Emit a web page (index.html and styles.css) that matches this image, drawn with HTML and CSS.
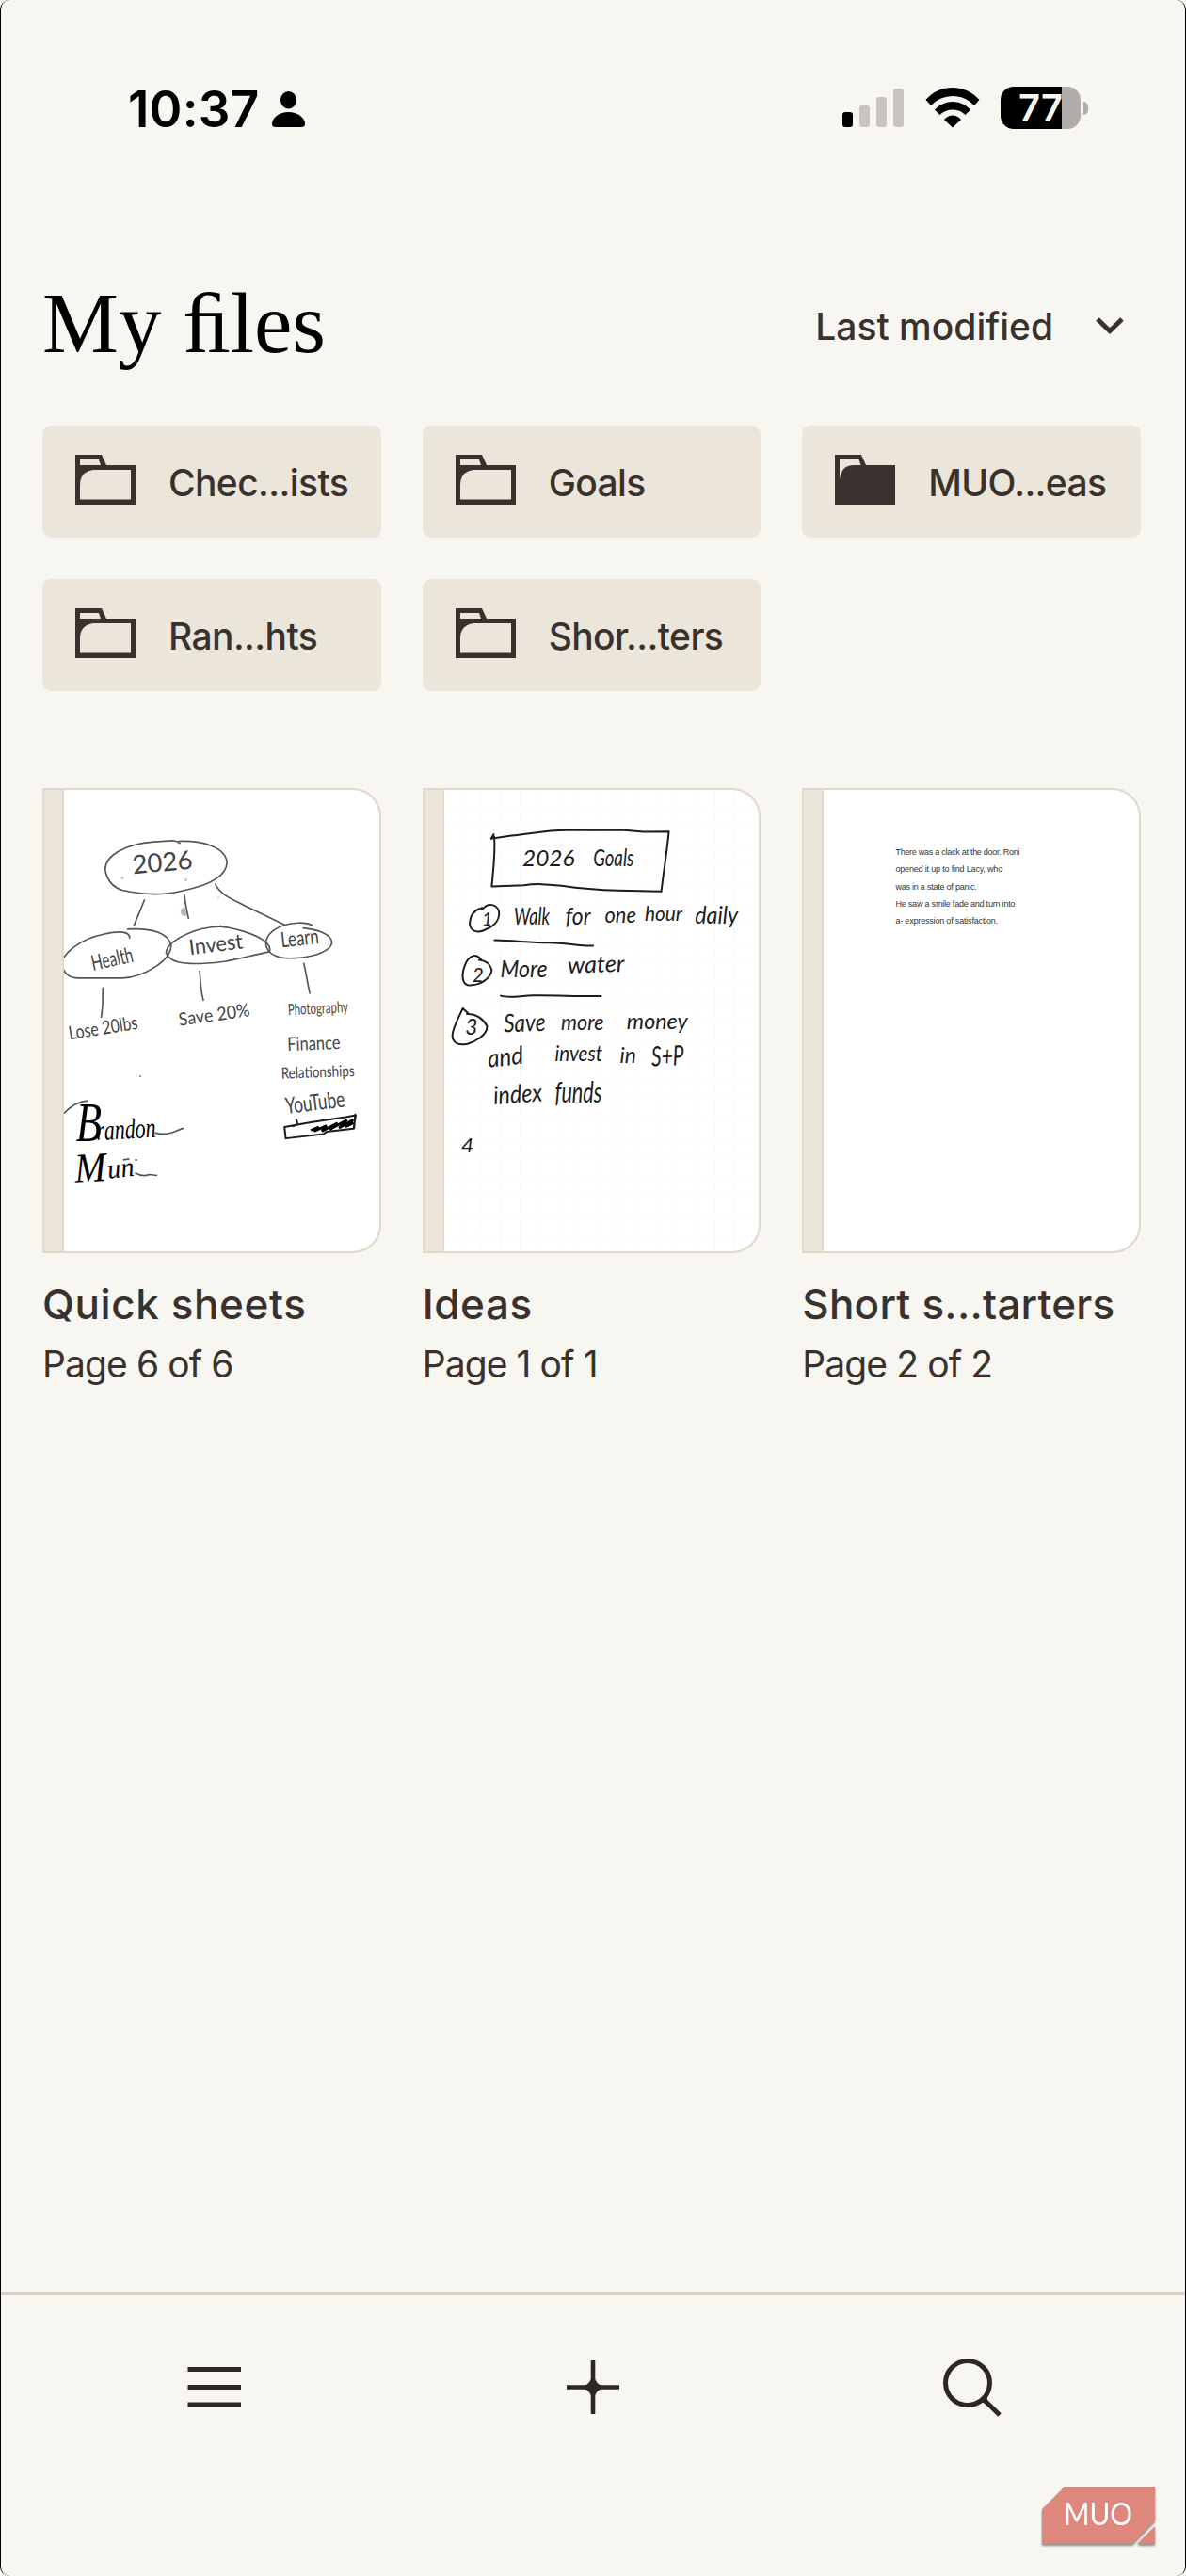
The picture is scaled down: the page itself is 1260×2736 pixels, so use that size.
FILE: index.html
```html
<!DOCTYPE html>
<html lang="en">
<head>
  <meta charset="UTF-8">
  <title>My files</title>
  <link rel="stylesheet" href="styles.css">
</head>
<body>
  <svg width="0" height="0" class="defs">
    <symbol id="folder" viewBox="0 0 64 53">
      <path fill-rule="evenodd" d="M0 0H28L33 11H64V53H0ZM5 5V11H27L25 5ZM19 16Q5 18 5 32V47.500H59V16Z"/>
    </symbol>
    <symbol id="folder-full" viewBox="0 0 64 53">
      <path fill-rule="evenodd" d="M0 0H28L33 11H64V53H0ZM5 5V26Q7 11 20 11H27.500L25.500 5Z"/>
    </symbol>
  </svg>

  <div class="screen">
    <div class="statusbar">
      <div class="clock">
        <span class="time">10:37</span>
        <svg width="35" height="38" viewBox="0 0 35 38">
          <ellipse cx="17.500" cy="9.200" rx="8.500" ry="9.200"/>
          <path d="M4 38C1 38 0 37 0 34.500C0 28 8 22 17.500 22S35 28 35 34.500C35 37 34 38 31 38Z"/>
        </svg>
      </div>
      <div class="indicators">
        <div class="signal">
          <span class="on"></span>
          <span></span>
          <span></span>
          <span></span>
        </div>
        <svg class="wifi" width="58" height="43" viewBox="0 0 58 43">
          <path d="M0.500 13Q12 0 29 0T57.500 13L52 19Q42 9 29 9T6 19Z"/>
          <path d="M10 23.500Q18 15 29 15T48 23.500L42.500 29Q37 23.500 29 23.500T15.500 29Z"/>
          <path d="M20 34Q24 29.500 29 29.500T38 34L29 42.500Z"/>
        </svg>
        <div class="battery"><span>77</span></div>
        <div class="nub"></div>
      </div>
    </div>

    <div class="header">
      <h1>My ﬁles</h1>
      <div class="sort">
        <span>Last modified</span>
        <svg width="30" height="18" viewBox="0 0 30 18"><path d="M2 2L15 14.500L28 2" fill="none" stroke="#38312d" stroke-width="5"/></svg>
      </div>
    </div>

    <div class="folders">
      <div class="folder"><svg><use href="#folder"/></svg><span>Chec...ists</span></div>
      <div class="folder"><svg><use href="#folder"/></svg><span>Goals</span></div>
      <div class="folder"><svg><use href="#folder-full"/></svg><span>MUO...eas</span></div>
      <div class="folder"><svg><use href="#folder"/></svg><span>Ran...hts</span></div>
      <div class="folder"><svg><use href="#folder"/></svg><span>Shor...ters</span></div>
    </div>

    <div class="notebooks">
      <div class="notebook">
        <div class="cover">
          <svg class="sheet" viewBox="114 57 1003 1468">
            <g class="pencil">
              <path d="M484 228C470 212 450 220 400 222C310 228 245 265 245 310C250 340 265 365 300 376C370 392 440 390 490 378C570 362 632 335 633 287C628 240 560 217 478 220"/>
              <path d="M371 405L336 490M497 390C501 420 504 440 511 467M595 355C610 390 650 405 690 425L815 485"/>
              <path d="M323 530C325 505 290 505 240 516C170 530 120 570 108 602C108 640 130 656 160 656H300C370 652 455 600 455 552C448 515 400 495 315 500"/>
              <path d="M632 495C610 488 560 494 525 507C480 525 440 550 439 575C450 605 490 612 560 609C630 608 680 590 768 572C780 540 720 510 610 489"/>
              <path d="M905 488C880 475 840 480 815 487C780 500 755 520 757 550C765 585 800 595 850 592C910 588 968 570 967 540C962 515 920 500 874 496"/>
              <path d="M238 685C236 720 240 745 232 782M546 632C548 670 550 700 558 728M877 607C885 640 890 675 897 706"/>
            </g>
            <circle cx="300" cy="337" r="5" fill="#ccc"/>
            <circle cx="502" cy="343" r="5" fill="#ccc"/>
            <circle cx="606" cy="400" r="4" fill="#ddd"/>
            <path d="M498 428Q480 435 486 449T506 456Z" fill="#bbb"/>
            <circle cx="357" cy="968" r="3" fill="#777"/>
            <g class="hand light">
              <text x="334" y="324" font-size="82" textLength="192" lengthAdjust="spacingAndGlyphs" transform="rotate(-5 334 324)">2026</text>
              <text x="206" y="632" font-size="68" textLength="135" lengthAdjust="spacingAndGlyphs" transform="rotate(-12 206 632)">Health</text>
              <text x="515" y="582" font-size="68" textLength="172" lengthAdjust="spacingAndGlyphs" transform="rotate(-7 515 582)">Invest</text>
              <text x="806" y="558" font-size="68" textLength="122" lengthAdjust="spacingAndGlyphs" transform="rotate(-6 806 558)">Learn</text>
              <text x="132" y="852" font-size="60" textLength="222" lengthAdjust="spacingAndGlyphs" transform="rotate(-9 132 852)">Lose 20lbs</text>
              <text x="482" y="808" font-size="58" textLength="228" lengthAdjust="spacingAndGlyphs" transform="rotate(-8 482 808)">Save 20%</text>
              <text x="828" y="774" font-size="50" textLength="192" lengthAdjust="spacingAndGlyphs" transform="rotate(-3 828 774)">Photography</text>
              <text x="826" y="887" font-size="60" textLength="168" lengthAdjust="spacingAndGlyphs" transform="rotate(-2 826 887)">Finance</text>
              <text x="806" y="976" font-size="50" textLength="234" lengthAdjust="spacingAndGlyphs" transform="rotate(-2 806 976)">Relationships</text>
              <text x="822" y="1088" font-size="72" textLength="190" lengthAdjust="spacingAndGlyphs" transform="rotate(-7 822 1088)">YouTube</text>
            </g>
            <path class="ink" d="M816 1130L820 1166L940 1152L950 1145L1036 1135L1043 1092L1010 1098L900 1115L816 1130M1041 1090L1038 1133M853 1105Q864 1124 842 1127"/>
            <path d="M900 1140L925 1130L910 1143L950 1125L935 1143L985 1117L960 1138L1015 1107L990 1133L1035 1106L1010 1129L1036 1116" fill="none" stroke="#000" stroke-width="8"/>
            <path class="pencil" d="M114 1086Q150 1048 190 1046M403 1148Q430 1156 460 1147L495 1133M340 1276Q365 1290 385 1281L411 1284M302 1234L322 1231M340 1234L347 1235"/>
            <g class="hand signature">
              <text x="152" y="1176" font-size="176" textLength="82" lengthAdjust="spacingAndGlyphs">B</text>
              <text x="218" y="1172" font-size="92" textLength="190" lengthAdjust="spacingAndGlyphs" transform="rotate(-3 218 1172)">randon</text>
              <text x="150" y="1306" font-size="132" textLength="100" lengthAdjust="spacingAndGlyphs" transform="rotate(-3 150 1306)">M</text>
              <text x="255" y="1294" font-size="88" textLength="85" lengthAdjust="spacingAndGlyphs" transform="rotate(-6 255 1294)">un</text>
            </g>
          </svg>
        </div>
        <h2>Quick sheets</h2>
        <p>Page 6 of 6</p>
      </div>

      <div class="notebook">
        <div class="cover">
          <svg class="sheet" viewBox="126 57 1003 1468">
            <defs>
              <pattern id="grid" x="180" y="110" width="62" height="62" patternUnits="userSpaceOnUse">
                <path d="M0 0H62M0 0V62" fill="none" stroke="#fbf8fc" stroke-width="5"/>
              </pattern>
            </defs>
            <rect x="126" y="57" width="1003" height="1468" fill="url(#grid)"/>
            <g class="ink">
              <path d="M283 198L275 212L340 202C400 196 460 184 520 185L690 184L760 190L841 189C835 255 825 310 817 380L680 377C600 375 540 368 500 362C450 357 420 354 380 360L277 364C282 310 289 260 285 205"/>
              <path d="M247 432C215 440 208 460 207 487C215 512 240 512 260 500C290 487 305 465 299 440C290 420 265 415 247 437"/>
              <path d="M286 535C350 536 400 543 460 543C520 544 550 554 600 553"/>
              <path d="M246 600C228 575 208 583 196 605C180 640 180 670 200 678C240 682 275 655 277 630C272 610 255 600 237 598"/>
              <path d="M306 712C330 720 360 713 410 711C480 710 550 714 625 713"/>
              <path d="M202 768L185 752C172 780 155 810 152 835C150 865 175 870 200 865C225 858 265 835 262 808C250 785 225 768 198 770"/>
            </g>
            <g class="hand goals">
              <text x="375" y="299" font-size="72" textLength="166" lengthAdjust="spacingAndGlyphs">2026</text>
              <text x="600" y="299" font-size="76" textLength="130" lengthAdjust="spacingAndGlyphs">Goals</text>
              <text x="246" y="487" font-size="58">1</text>
              <text x="348" y="484" font-size="76" textLength="114" lengthAdjust="spacingAndGlyphs">Walk</text>
              <text x="512" y="484" font-size="76" textLength="80" lengthAdjust="spacingAndGlyphs">for</text>
              <text x="637" y="480" font-size="72" textLength="100" lengthAdjust="spacingAndGlyphs">one</text>
              <text x="764" y="474" font-size="66" textLength="120" lengthAdjust="spacingAndGlyphs">hour</text>
              <text x="924" y="482" font-size="76" textLength="138" lengthAdjust="spacingAndGlyphs">daily</text>
              <text x="215" y="668" font-size="62">2</text>
              <text x="304" y="653" font-size="76" textLength="150" lengthAdjust="spacingAndGlyphs">More</text>
              <text x="519" y="641" font-size="74" textLength="182" lengthAdjust="spacingAndGlyphs" transform="rotate(-2 519 641)">water</text>
              <text x="193" y="836" font-size="68">3</text>
              <text x="316" y="828" font-size="80" textLength="133" lengthAdjust="spacingAndGlyphs" transform="rotate(-2 316 828)">Save</text>
              <text x="498" y="820" font-size="72" textLength="136" lengthAdjust="spacingAndGlyphs">more</text>
              <text x="707" y="818" font-size="72" textLength="194" lengthAdjust="spacingAndGlyphs">money</text>
              <text x="267" y="940" font-size="80" textLength="114" lengthAdjust="spacingAndGlyphs" transform="rotate(-6 267 940)">and</text>
              <text x="478" y="920" font-size="70" textLength="152" lengthAdjust="spacingAndGlyphs">invest</text>
              <text x="685" y="926" font-size="70" textLength="52" lengthAdjust="spacingAndGlyphs">in</text>
              <text x="786" y="936" font-size="88" textLength="104" lengthAdjust="spacingAndGlyphs" transform="rotate(-2 786 936)">S+P</text>
              <text x="284" y="1058" font-size="80" textLength="156" lengthAdjust="spacingAndGlyphs" transform="rotate(-4 284 1058)">index</text>
              <text x="478" y="1052" font-size="90" textLength="150" lengthAdjust="spacingAndGlyphs">funds</text>
              <text x="180" y="1212" font-size="66" textLength="40" lengthAdjust="spacingAndGlyphs">4</text>
            </g>
          </svg>
        </div>
        <h2>Ideas</h2>
        <p>Page 1 of 1</p>
      </div>

      <div class="notebook">
        <div class="cover">
          <svg class="sheet" viewBox="138 57 1003 1468">
            <g class="typed">
              <text x="367" y="263" textLength="396">There was a clack at the door. Roni</text>
              <text x="367" y="318" textLength="341">opened it up to find Lacy, who</text>
              <text x="367" y="373" textLength="259">was in a state of panic.</text>
              <text x="367" y="427" textLength="381">He saw a smile fade and turn into</text>
              <text x="367" y="482" textLength="326">a- expression of satisfaction.</text>
            </g>
          </svg>
        </div>
        <h2 class="long">Short s...tarters</h2>
        <p>Page 2 of 2</p>
      </div>
    </div>

    <div class="toolbar">
      <svg width="60" height="60" viewBox="0 0 60 60"><path d="M1.500 11.500H58M1.500 30.500H58M1.500 49H58" stroke="#2d2825" stroke-width="5"/></svg>
      <svg width="60" height="60" viewBox="0 0 60 60">
        <path d="M2 30.500H58M30 2V59" stroke="#2d2825" stroke-width="4.600"/>
        <path d="M30 20Q32 28.500 40 30.500Q32 32.500 30 41Q28 32.500 20 30.500Q28 28.500 30 20Z" fill="#2d2825" stroke="#2d2825" stroke-width="3"/>
      </svg>
      <svg width="64" height="64" viewBox="0 0 64 64">
        <circle cx="26" cy="26" r="23.500" fill="none" stroke="#2d2825" stroke-width="5"/>
        <path d="M42 42.500L60 60" stroke="#2d2825" stroke-width="5"/>
        <path d="M36 48L49 38Q45 42 48 46L46 49Q41 45 36 48Z" fill="#2d2825"/>
      </svg>
    </div>

    <svg class="watermark" width="124" height="66" viewBox="0 0 124 66">
      <path d="M25 1H121V37L97 62H1V25Z"/>
      <path d="M121 43V62H102Z"/>
      <text x="24" y="42" textLength="73" lengthAdjust="spacingAndGlyphs">MUO</text>
    </svg>
  </div>
</body>
</html>
```

FILE: styles.css
```css
* {
  box-sizing: border-box;
}

body {
  margin: 0;
  background: #fff;
  font-family: Inter, "Liberation Sans", sans-serif;
  color: #38312d;
}

.defs {
  position: absolute;
}

.screen {
  position: relative;
  display: flex;
  flex-direction: column;
  width: 1260px;
  height: 2736px;
  background: #f7f6f0;
  border-left: 1px solid #000;
  border-right: 1px solid #000;
  border-radius: 10px;
  overflow: hidden;
}

/* status bar */
.statusbar {
  display: flex;
  justify-content: space-between;
  height: 230px;
  padding: 92px 103px 0 135px;
  color: #000;
}

.clock {
  display: flex;
  height: 48px;
  align-items: center;
  gap: 13px;
}

.time {
  font-size: 53px;
  font-weight: 600;
  letter-spacing: 0.2px;
}

.indicators {
  display: flex;
  height: 45px;
}

.signal {
  display: flex;
  align-items: flex-end;
  gap: 7px;
  height: 43px;
  margin-right: 23px;
}

.signal span {
  width: 11px;
  height: 41px;
  border-radius: 3px;
  background: #c8c5c0;
}

.signal .on { height: 16px; background: #000; }
.signal span:nth-child(2) { height: 23px; }
.signal span:nth-child(3) { height: 32px; }

.wifi {
  margin: 1px 22px 0 0;
}

.battery {
  width: 85px;
  height: 45px;
  border-radius: 14px;
  background: linear-gradient(to right, #000 65px, #b0adaa 65px);
  color: #f8f6f1;
  font-size: 40px;
  font-weight: 600;
  line-height: 45px;
  text-align: center;
}

.nub {
  width: 5px;
  height: 14px;
  margin: 16px 0 0 3px;
  border-radius: 0 5px 5px 0;
  background: #b0adaa;
}

/* title row */
.header {
  display: flex;
  justify-content: space-between;
  height: 222px;
  padding: 60px 65px 0 44px;
}

h1 {
  margin: 0;
  color: #000;
  font-family: "Liberation Serif", serif;
  font-size: 91px;
  font-weight: 400;
  line-height: 108px;
}

.sort {
  display: flex;
  align-items: center;
  gap: 45px;
  height: 112px;
  font-size: 39px;
  font-weight: 500;
}

/* folders */
.folders {
  display: grid;
  grid-template-columns: repeat(3, 1fr);
  gap: 44px;
  padding: 0 47px 0 44px;
}

.folder {
  display: flex;
  align-items: center;
  height: 119px;
  padding-left: 35px;
  border-radius: 9px;
  background: #ece5da;
  font-size: 39px;
  font-weight: 500;
  letter-spacing: -0.6px;
}

.folder span {
  padding-top: 2px;
}

.folder svg {
  width: 64px;
  height: 53px;
  margin-right: 35px;
  margin-bottom: 4px;
  fill: #38312d;
}

/* notebooks */
.notebooks {
  display: grid;
  grid-template-columns: repeat(3, 1fr);
  gap: 44px;
  padding: 103px 47px 0 44px;
}

.cover {
  height: 494px;
  padding-left: 19px;
  border: 2px solid #e1dacb;
  border-radius: 0 30px 30px 0;
  background: #ece5da;
  overflow: hidden;
}

.sheet {
  display: block;
  width: 100%;
  height: 100%;
  border-left: 2px solid #e1dacb;
  border-radius: 0 28px 28px 0;
  background: #fff;
}

.notebook h2 {
  margin: 29px 0 0;
  font-size: 44px;
  font-weight: 500;
  line-height: 50px;
  letter-spacing: 0.6px;
}

.notebook .long {
  letter-spacing: 0.2px;
}

.notebook p {
  margin: 14px 0 0;
  font-size: 39px;
  line-height: 50px;
  letter-spacing: -0.9px;
}

.pencil {
  fill: none;
  stroke: #555;
  stroke-width: 5;
}

.ink {
  fill: none;
  stroke: #1c1c1c;
  stroke-width: 6;
  stroke-linecap: round;
  stroke-linejoin: round;
}

.hand {
  font-family: Lato, sans-serif;
  fill: #1c1c1c;
}

.goals {
  font-style: italic;
}

.light {
  fill: #444;
}

.signature {
  font-family: "Liberation Serif", serif;
  font-style: italic;
  fill: #000;
}

.typed {
  font-family: "Liberation Sans", sans-serif;
  font-size: 27px;
  fill: #333;
}

/* bottom toolbar */
.toolbar {
  display: flex;
  justify-content: space-between;
  height: 302px;
  margin-top: auto;
  padding: 67px 193px 0 197px;
  border-top: 4px solid #d9d1c4;
}

.watermark {
  position: absolute;
  right: 29px;
  bottom: 30px;
  fill: #de877c;
  filter: drop-shadow(0 2px 1px #888);
}

.watermark text {
  font-family: Lato, sans-serif;
  font-size: 32px;
  fill: #fff;
}
```
